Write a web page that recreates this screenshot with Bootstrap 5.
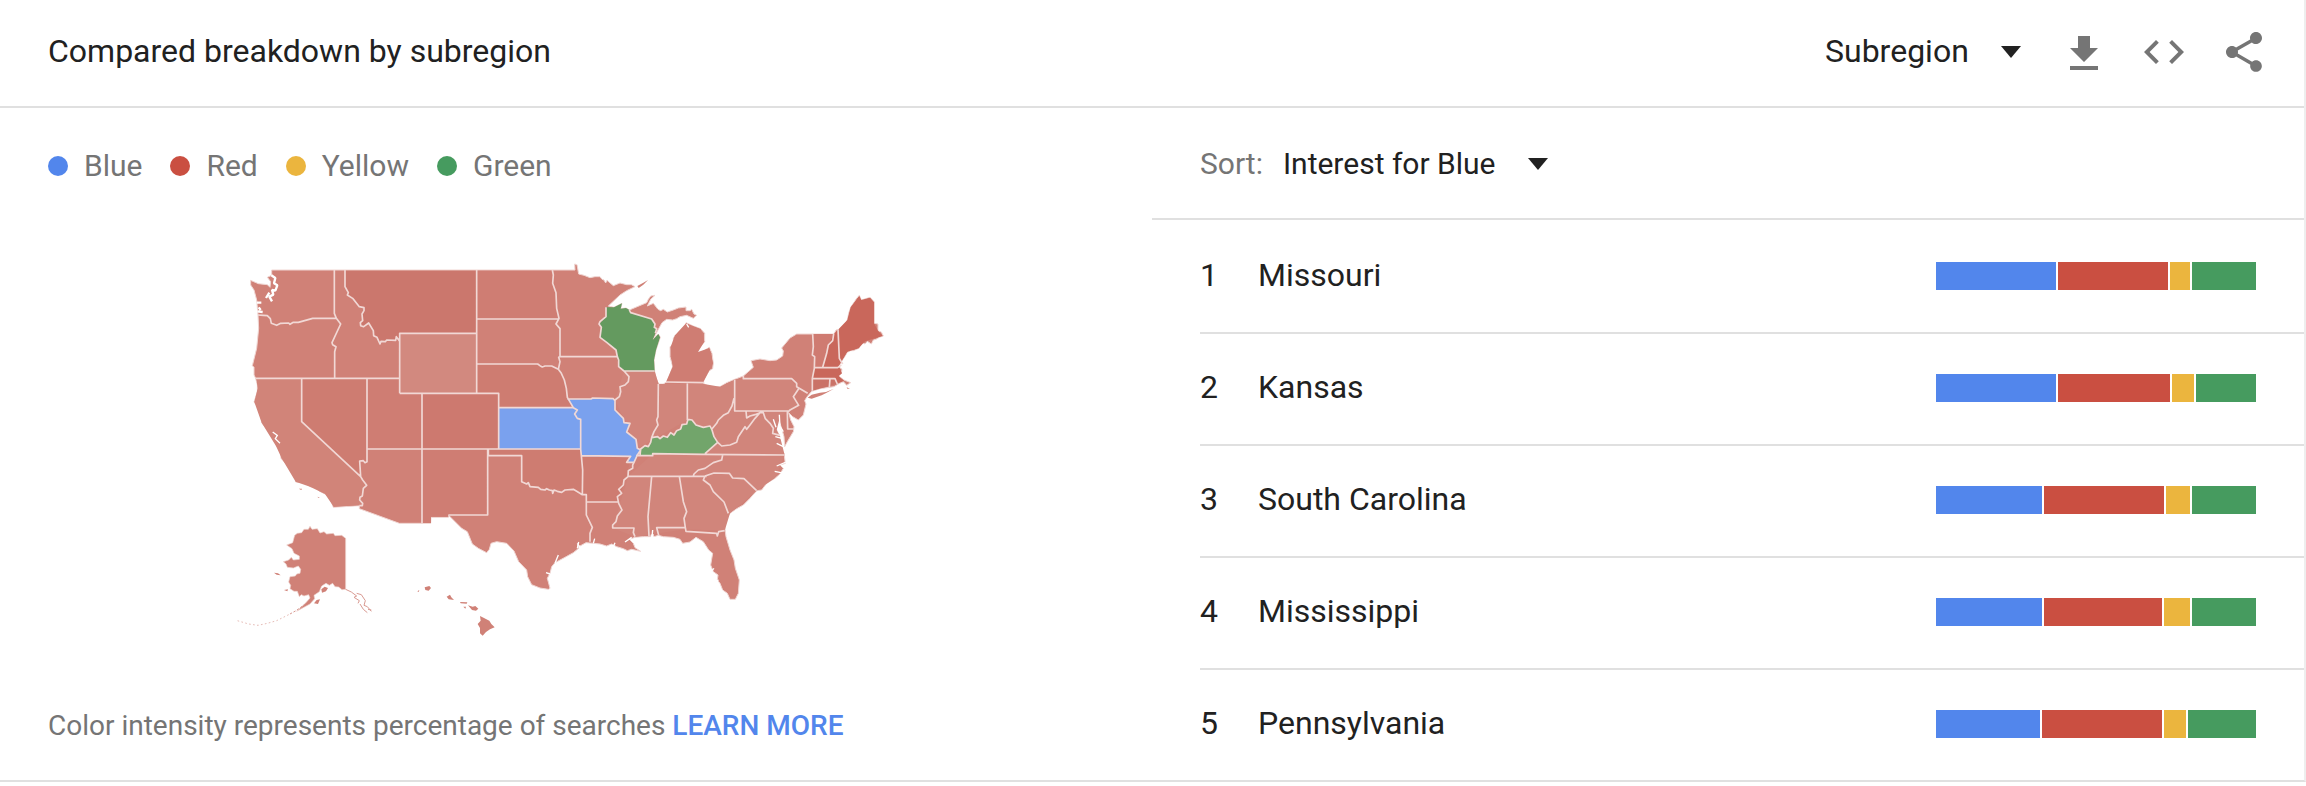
<!DOCTYPE html>
<html lang="en">
<head>
<meta charset="utf-8">
<meta name="viewport" content="width=device-width, initial-scale=1">
<title>Compared breakdown by subregion</title>
<link href="https://cdn.jsdelivr.net/npm/bootstrap@5.3.0/dist/css/bootstrap.min.css" rel="stylesheet">
<style>
  :root { --line: #e0e0e0; --ink: #212121; --muted: #757575; }
  body { font-family: Roboto, "Liberation Sans", sans-serif; color: var(--ink); background: #fff; }
  .widget { border-right: 2px solid #eee; border-bottom: 2px solid var(--line); margin-bottom: 4px; }
  .widget-head { border-bottom: 2px solid var(--line); padding: 28px 36px 30px 48px; }
  .widget-title { font-size: 32px; line-height: 46px; padding-bottom: 2px; font-weight: 400; }
  .picker {
    appearance: none; border: 0; padding: 0 52px 0 0; color: var(--ink); font-size: 30px; line-height: 48px;
    background: url("data:image/svg+xml,%3Csvg xmlns='http://www.w3.org/2000/svg' width='20' height='12'%3E%3Cpath d='M0 0h20L10 12z' fill='%23212121'/%3E%3C/svg%3E") right center no-repeat;
  }
  .head-tools { gap: 32px; }
  .head-tools .picker { margin-right: 7px; font-size: 32px; line-height: 46px; padding-bottom: 2px; }
  .tool { border: 0; padding: 0; background: none; width: 48px; height: 48px; }
  .tool svg { display: block; width: 48px; height: 48px; fill: var(--muted); }
  .map-side { padding: 36px 48px 30px; color: var(--muted); }
  .legend-list { gap: 28px; font-size: 30px; line-height: 44px; }
  .legend-list li { gap: 16px; }
  .dot { width: 20px; height: 20px; border-radius: 50%; }
  .tone-blue { background: #5286ec; }
  .tone-red { background: #ca4f41; }
  .tone-yellow { background: #ebb53e; }
  .tone-green { background: #469b5f; }
  .us-map { width: 692px; max-width: 100%; margin-top: 10px; }
  .note { font-size: 28px; line-height: 48px; }
  .note a { color: #5286ec; font-weight: 500; text-decoration: none; }
  .sort-row { border-bottom: 2px solid var(--line); padding: 32px 48px 30px; gap: 20px; font-size: 30px; line-height: 48px; }
  .sort-row label { color: var(--muted); }
  .rank-list { padding-left: 48px; font-size: 32px; line-height: 46px; }
  .rank-row { height: 112px; padding-right: 48px; }
  .rank-row > span { padding-bottom: 2px; }
  .rank-row + .rank-row { box-shadow: inset 0 2px var(--line); }
  .rank-no { width: 58px; }
  .split { width: 320px; height: 28px; gap: 2px; }
  .split span { flex: 0 1 0; }
</style>
</head>
<body>
<main class="widget">
  <header class="widget-head d-flex align-items-center justify-content-between">
    <h1 class="widget-title m-0">Compared breakdown by subregion</h1>
    <div class="head-tools d-flex align-items-center">
      <select class="picker" aria-label="Resolution"><option>Subregion</option></select>
      <button class="tool" type="button" aria-label="Download"><svg viewBox="0 0 24 24"><path d="M19 10h-4V4H9v6H5l7 7zM5 19v2h14v-2z"/></svg></button>
      <button class="tool" type="button" aria-label="Embed"><svg viewBox="0 0 24 24"><path d="M9.4 16.600 4.800 12l4.600-4.600L8 6l-6 6 6 6zm5.200 0 4.600-4.600-4.600-4.600L16 6l6 6-6 6z"/></svg></button>
      <button class="tool" type="button" aria-label="Share"><svg viewBox="0 0 24 24"><path d="M18 16.080c-.76 0-1.440.3-1.960.77L8.910 12.700c.05-.23.09-.46.09-.7s-.04-.47-.09-.7l7.050-4.110c.54.5 1.250.81 2.040.81 1.660 0 3-1.340 3-3s-1.340-3-3-3-3 1.340-3 3c0 .24.04.47.09.7L8.040 9.810C7.500 9.310 6.790 9 6 9c-1.660 0-3 1.340-3 3s1.340 3 3 3c.79 0 1.500-.31 2.040-.81l7.120 4.160c-.05.21-.08.43-.08.65 0 1.610 1.310 2.920 2.920 2.920s2.920-1.310 2.920-2.920-1.310-2.920-2.920-2.920z"/></svg></button>
    </div>
  </header>
  <div class="row g-0">
    <section class="map-side col-6 d-flex flex-column justify-content-between">
      <ul class="legend-list list-unstyled d-flex mb-0">
        <li class="d-flex align-items-center"><span class="dot tone-blue"></span>Blue</li>
        <li class="d-flex align-items-center"><span class="dot tone-red"></span>Red</li>
        <li class="d-flex align-items-center"><span class="dot tone-yellow"></span>Yellow</li>
        <li class="d-flex align-items-center"><span class="dot tone-green"></span>Green</li>
      </ul>
      <svg class="us-map mx-auto" viewBox="0 0 2076 1200" role="img" aria-label="Map of the United States by leading term">
        <!-- mainland -->
        <g stroke="#f0d6d3" stroke-width="3" stroke-linejoin="round">
        <path fill="#d08177" d="M62 91 85 101 112 104 120 112 122 95 112 82 125 76 125 60H1035L1034 42 1041 44 1046 72 1062 76 1080 83 1095 80 1110 80 1116 88 1122 90 1127 99 1131 91 1150 107 1170 99 1190 104 1204 104 1215 110 1190 122 1170 135 1135 168 1152 172 1176 160 1172 176 1188 174 1198 180 1250 158 1255 148 1262 138 1275 136 1262 148 1252 168 1270 160 1284 178 1292 182 1300 178 1312 186 1330 180 1345 174 1368 171 1368 182 1380 182 1385 178 1392 192 1400 196 1390 205 1370 196 1350 200 1340 206 1328 210 1310 208 1296 218 1284 240 1268 270 1285 252 1291 262 1278 300 1272 330 1274 365 1278 385 1286 402 1300 402 1312 394 1328 350 1320 320 1320 290 1330 285 1330 265 1336 255 1344 262 1350 248 1352 262 1356 236 1368 226 1368 218 1390 228 1412 236 1424 250 1424 275 1410 290 1402 306 1412 315 1425 300 1438 292 1446 310 1450 340 1448 356 1438 362 1420 390 1422 402 1445 412 1470 410 1490 398 1514 388 1540 378 1570 352 1563 332 1590 327 1620 332 1640 330 1658 318 1660 303 1655 294 1680 264 1700 252H1812L1818 240 1832 238 1844 226 1852 210 1856 190 1862 172 1880 145 1888 136 1894 150 1920 142 1933 156V220L1944 222 1944 242 1954 246 1960 258 1948 262 1938 268 1930 270 1924 282 1912 274 1905 282 1892 276 1888 294 1870 302 1862 302 1852 307 1843 322 1834 335 1826 350 1836 358 1834 370 1826 378 1842 390 1862 398 1850 406 1840 395 1825 402 1812 410 1770 416 1745 424 1730 442 1724 452 1728 462 1720 495 1705 510 1688 500 1676 488 1682 510 1692 530 1690 545 1672 575 1664 590 1662 560 1655 535 1648 515 1648 494 1636 508 1640 540 1650 560 1640 575 1648 600 1662 610 1666 640 1650 645 1660 655 1650 672 1635 685 1610 700 1595 720 1580 722 1560 745 1540 765 1520 776 1500 790 1490 805 1484 830 1488 860 1500 900 1512 930 1516 955 1528 990 1525 1030 1516 1048 1500 1048 1492 1030 1478 1020 1470 1000 1462 990 1464 975 1450 965 1442 945 1448 910 1436 900 1420 875 1398 862 1380 876 1358 880 1350 868 1330 862 1300 860 1285 856 1272 860 1266 842 1262 860 1240 860 1215 862 1198 868 1210 880 1215 893 1232 904 1205 898 1192 902 1180 896 1160 890 1145 882 1130 888 1110 882 1090 880 1068 878 1050 888 1042 880 1046 895 1030 908 1005 922 990 930 975 938 965 950 960 970 952 985 960 1015 955 1018 930 1014 905 1004 893 980 890 960 866 935 852 903 830 880 800 875 783 880 778 898 770 908 745 895 727 882 712 845 695 835 655 795V802H603L602 820H508L388 776 388 767 310 772 300 745 285 732 267 723 262 714 240 710 228 700 197 696 194 672 186 660 175 650 153 625 152 612 157 605 155 598 140 590 135 575 120 550 95 518 90 478 72 456 82 425 82 405 77 385 72 375 72 352 67 347 80 295 86 235 84 195 80 150 72 120 62 105Z"/>
        </g>
        <!-- states whose tint differs from the common one -->
        <path fill="#cb776d" d="M345 62 345 110 355 128 352 135 368 145 388 170 402 173 396 192 398 212 391 218 401 230 416 219 430 242 431 257 441 262 450 282 466 275 497 271 509 274V250H740V62Z"/>
        <path fill="#d2897f" d="M509 250H740V430H509Z"/>
        <path fill="#d18479" d="M79 385H215V515L392 680 398 690 410 706 397 738 398 760 388 766 311 770 285 732 240 710 197 695 155 625 138 588 95 518 73 456 83 415Z"/>
        <path fill="#ce7c71" d="M215 385H411V635L389 633 392 680 215 515ZM740 342H923L985 358 1003 390 1012 442 1030 473H806V430H740ZM775 597H1052L1058 660 1057 734 1005 720 925 712 875 695V617H775ZM1052 617 1202 619 1190 680 1163 756H1069V734H1057Z"/>
        <path fill="#cd796f" d="M576 430H806V597H576Z"/>
        <path fill="#cf7d73" d="M411 385H509V430H576V597H411ZM576 597H773V795H655V800H603V819H576ZM740 62H967L978 128 987 207H740ZM1308 396 1328 350 1322 290 1335 256 1368 220 1412 237 1423 275 1404 306 1438 294 1449 340 1420 397Z"/>
        <path fill="#d1857b" d="M1182 363H1274L1286 402H1372L1422 402 1470 410 1514 389 1680 386 1706 416 1690 440 1706 466 1674 484 1650 500 1640 540 1650 560 1664 615 1635 684 1580 722 1500 790 1484 842 1366 838 1215 860 1148 834 1195 679 1268 611 1463 577 1372 510 1222 595 1155 450Z"/>
        <path fill="#cf7b71" d="M1748 252H1811L1808 272 1795 285 1778 352H1753Z"/>
        <path fill="#c9675b" d="M1812 252 1824 239 1852 210 1862 172 1888 138 1894 150 1920 143 1932 157V220L1944 242 1958 258 1905 274 1886 295 1852 305 1826 349 1836 370 1826 378 1842 392 1822 400 1815 386H1747L1753 353H1778L1795 285Z"/>
        <path fill="#ca7267" d="M1747 386H1816L1822 401 1747 422Z"/>
        <path fill="#649a5f" d="M1128 172 1152 172 1176 160 1172 176 1188 174 1198 180 1202 188 1265 207 1275 222 1273 232 1280 236 1276 250 1268 270 1285 252 1290 262 1278 300 1272 330 1274 364H1182L1166 350 1162 320 1158 300 1110 262 1114 232 1107 222 1128 200Z"/>
        <path fill="#7aa1ee" d="M806 473H1030L1012 447H1083L1150 446 1155 452V480L1180 505 1182 518 1200 520 1190 546 1218 568 1222 595 1232 600 1222 615 1212 637H1190L1202 619H1054L1052 597H806Z"/>
        <path fill="#72a56b" d="M1230 617 1232 597 1245 587 1255 590 1262 577 1265 563 1283 560 1290 566 1300 558 1312 562 1322 548 1332 555 1340 542 1352 537 1356 524 1370 522 1374 508 1386 510 1398 525 1420 532 1440 528 1446 540 1452 560 1463 577 1425 611H1268V617Z"/>
        <!-- state borders -->
        <path fill="none" stroke="#f1d8d5" stroke-width="5" stroke-linejoin="round" d="M84 195 100 196 112 197 121 206 124 220 140 226 152 220 176 219 180 223 190 217 205 217 248 205H319M313 60V190L319 205 332 222 306 278 308 284 318 290 314 305V385M77 385H509M215 385V515L392 680M411 385V635L405 638 400 632 389 633 392 680 398 690 410 706 400 715 397 738 390 742 389 750 398 760 397 767 388 767M345 60V110L355 128 352 135 368 145 388 170 402 173 402 182 396 192 398 212 391 218 392 227 401 230 416 219 430 242 431 257 441 262 450 282 453 274 466 275 470 270 497 271 499 260 509 274M509 430V250H740M509 430H806V597M576 430V820M740 60V430M411 597H1052M740 207H987M967 60 970 75 968 100 978 128 980 175 987 205 978 222 990 236V320L986 322 990 335 985 358M740 342H923L930 347 937 351 945 348 965 348 985 358 994 370 1003 390 1009 415 1012 442 1030 473H806M990 320H1162M1012 447H1083L1088 444 1150 446 1155 452M1030 473 1042 480 1034 492 1042 505 1052 508V597L1054 617 1058 660 1057 734M775 597V617H875V695L890 702 895 698 900 710 925 712 932 718 945 720 950 716 958 720 967 722 968 730 972 720 982 724 995 727 1005 720 1030 718 1040 724 1057 734H1069V795L1087 832 1080 850V875M773 597V795H655M1069 756H1163M1054 617 1202 619 1190 637H1212M1128 172V200L1110 215 1107 222 1114 232 1110 262 1130 277 1158 300 1162 320 1166 330 1166 350 1182 363H1274M1182 363 1197 380 1195 395 1185 405 1170 410 1172 425 1168 440 1155 450V480L1180 505 1182 518 1200 520 1190 546 1218 568 1222 595 1232 600 1222 615 1212 637 1208 645 1208 655 1195 662 1194 680 1182 690 1180 705 1166 718 1175 730 1162 740 1166 760 1176 780 1162 798 1158 815 1148 825V834H1212L1210 848 1215 860M1198 180 1202 188 1265 207 1275 222 1273 232 1280 236 1276 250M1285 402 1284 500 1280 510 1284 525 1272 545 1265 563M1308 396 1422 398M1372 398V510M1230 617 1232 597 1245 587 1255 590 1262 577 1265 563 1283 560 1290 566 1300 558 1312 562 1322 548 1332 555 1340 542 1352 537 1356 524 1370 522 1374 508 1386 510 1398 525 1420 532 1440 528 1446 540 1452 560 1463 577 1425 611M1445 538 1460 520 1465 510 1480 496 1495 488 1506 468 1512 445M1514 390V483H1674M1548 483 1550 504 1560 498 1575 494 1590 488 1600 488 1606 506 1620 520 1630 535 1628 550 1650 556M1463 577 1475 588 1500 585 1520 577 1525 560 1545 530 1550 538 1560 525 1575 505 1590 488M1218 617H1268V611L1415 613 1665 615M1195 679H1430M1478 615 1475 630 1450 638 1425 655 1405 660 1392 672 1390 678M1425 678 1452 669 1498 670 1508 684 1542 686 1580 722M1425 678 1420 690 1440 705 1450 725 1482 756 1495 790M1265 679 1254 800 1257 858M1348 679 1360 755 1370 785 1362 805 1366 833H1280L1286 856M1366 833 1368 844 1460 850 1462 858 1466 845 1484 842M1540 378V386H1685L1700 400 1700 410 1733 430M1706 416 1690 440 1706 466 1680 480 1672 487 1673 537H1692M1748 252 1750 290 1747 315 1754 320 1753 355 1747 385V422M1753 353H1823L1834 345M1747 385 1815 386 1822 402M1811 252 1808 272 1795 285 1790 310 1778 352M1824 238 1828 325 1838 342M1800 386 1798 412"/>
        <!-- inlets -->
        <path fill="none" stroke="#fff" stroke-width="7" stroke-linejoin="bevel" d="M124 76 136 84 132 100 142 106 136 122 126 120 130 134 118 140 126 154M118 128 108 144M80 158 94 158M82 184 98 186M86 172 92 180"/>
        <path fill="none" stroke="#fff" stroke-width="4" d="M128 546 142 556 136 566 150 580M1648 494 1650 530 1660 545M1636 560 1658 566M1640 580 1660 590M1640 648 1668 636M1634 664 1664 670M975 940 985 915M960 972 948 968M1042 895 1046 876M1090 880 1094 866M1150 890 1155 878M1185 876 1205 862M1370 222 1376 232M1440 1000 1466 990M1440 968 1452 955M1266 862 1268 840M1630 508 1638 532"/>
        <path fill="#d08177" d="M1733 443 1745 434 1770 428 1788 426 1812 416 1790 428 1775 436 1745 446ZM1850 412 1860 416 1852 416ZM1222 108 1240 98 1254 90 1240 104 1226 114ZM206 716 216 716 214 720ZM263 740 270 743 264 743Z"/>
        <!-- Alaska -->
        <path fill="#d08177" stroke="#efd3cf" stroke-width="2" d="M170 885 188 878 194 856 202 850 215 848 222 838 235 838 240 829 246 838 262 836 270 849 282 845 290 852 310 850 315 857 335 856 347 865V1018L336 1019 326 1011 315 1010 308 1000 298 1006 288 1000 275 1008 268 1025 252 1036 254 1046 240 1062 214 1076 200 1084 226 1060 240 1044 236 1034 222 1038 214 1034 208 1040 202 1024 192 1024 180 1016 182 1006 176 996 180 980 196 978 200 972 210 970 212 958 205 948 190 954 172 952 168 942 160 935 176 930 184 922 190 930 208 928 208 918 192 910 186 896Z"/>
        <path fill="#d08177" d="M274 1018 284 1010 294 1014 288 1024 276 1028ZM252 1060 260 1050 270 1048 264 1062ZM132 968 144 970 152 976 140 974ZM162 1020 174 1018 172 1024Z"/>
        <g fill="none" stroke="#d99a92" stroke-width="3">
          <path d="M347 1018 364 1026 380 1038 372 1042 388 1052 384 1060M380 1030 394 1034 406 1052 402 1066 412 1070 424 1084M390 1062 400 1078 412 1088M414 1078 424 1080"/>
          <path stroke-dasharray="7 5" d="M226 1062 198 1082 180 1092"/>
          <path stroke-width="2" stroke-dasharray="5 7" d="M176 1094 140 1112 112 1120 84 1126 56 1122 22 1112"/>
        </g>
        <!-- Hawaii -->
        <path fill="#d08177" d="M584 1012 598 1008 603 1014 596 1022 586 1020ZM562 1024 568 1020 566 1026ZM650 1040 660 1034 664 1042 672 1050 656 1048ZM690 1056 712 1057 710 1061 692 1060ZM700 1070 708 1070 706 1076ZM714 1066 728 1070 736 1068 745 1076 738 1082 726 1080ZM750 1098 762 1104 778 1112 784 1122 794 1132 780 1138 768 1146 758 1157 750 1150 750 1134 743 1122 752 1112Z"/>
      </svg>
      <p class="note m-0">Color intensity represents percentage of searches <a href="#">LEARN MORE</a></p>
    </section>
    <section class="col-6">
      <div class="sort-row d-flex align-items-center">
        <label for="sort">Sort:</label>
        <select class="picker" id="sort"><option>Interest for Blue</option></select>
      </div>
      <ol class="rank-list list-unstyled m-0">
        <li class="rank-row d-flex align-items-center"><span class="rank-no">1</span><span class="flex-grow-1">Missouri</span>
          <div class="split d-flex"><span class="tone-blue" style="flex-grow:120"></span><span class="tone-red" style="flex-grow:110"></span><span class="tone-yellow" style="flex-grow:20"></span><span class="tone-green" style="flex-grow:64"></span></div></li>
        <li class="rank-row d-flex align-items-center"><span class="rank-no">2</span><span class="flex-grow-1">Kansas</span>
          <div class="split d-flex"><span class="tone-blue" style="flex-grow:120"></span><span class="tone-red" style="flex-grow:112"></span><span class="tone-yellow" style="flex-grow:22"></span><span class="tone-green" style="flex-grow:60"></span></div></li>
        <li class="rank-row d-flex align-items-center"><span class="rank-no">3</span><span class="flex-grow-1">South Carolina</span>
          <div class="split d-flex"><span class="tone-blue" style="flex-grow:106"></span><span class="tone-red" style="flex-grow:120"></span><span class="tone-yellow" style="flex-grow:24"></span><span class="tone-green" style="flex-grow:64"></span></div></li>
        <li class="rank-row d-flex align-items-center"><span class="rank-no">4</span><span class="flex-grow-1">Mississippi</span>
          <div class="split d-flex"><span class="tone-blue" style="flex-grow:106"></span><span class="tone-red" style="flex-grow:118"></span><span class="tone-yellow" style="flex-grow:26"></span><span class="tone-green" style="flex-grow:64"></span></div></li>
        <li class="rank-row d-flex align-items-center"><span class="rank-no">5</span><span class="flex-grow-1">Pennsylvania</span>
          <div class="split d-flex"><span class="tone-blue" style="flex-grow:104"></span><span class="tone-red" style="flex-grow:120"></span><span class="tone-yellow" style="flex-grow:22"></span><span class="tone-green" style="flex-grow:68"></span></div></li>
      </ol>
    </section>
  </div>
</main>
<script src="https://cdn.jsdelivr.net/npm/bootstrap@5.3.0/dist/js/bootstrap.bundle.min.js"></script>
</body>
</html>
